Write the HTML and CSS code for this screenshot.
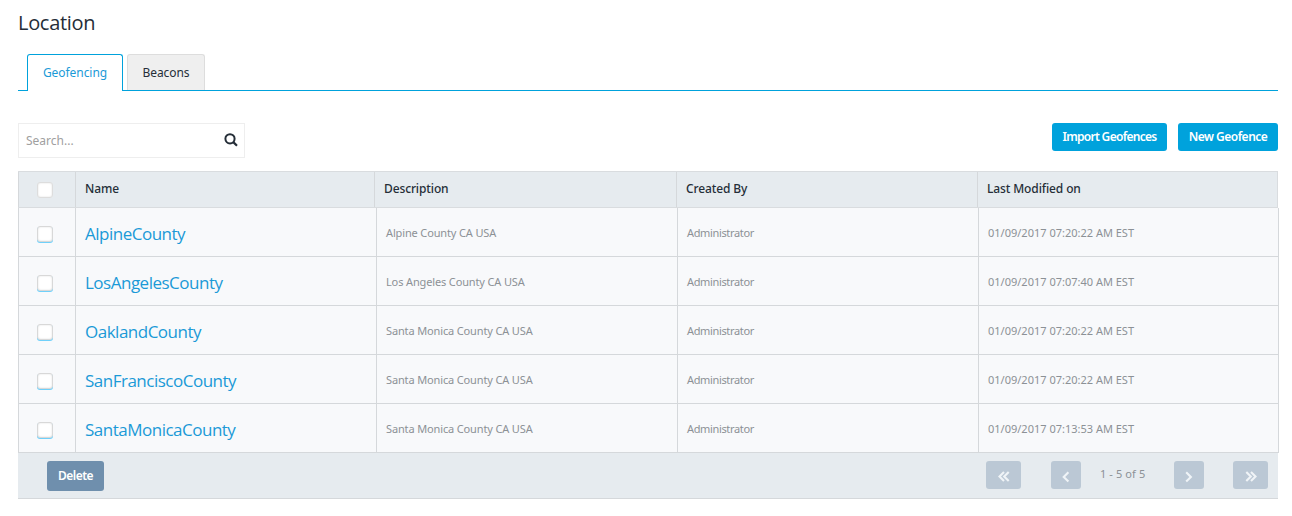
FILE: index.html
```html
<!DOCTYPE html>
<html lang="en">
<head>
<meta charset="utf-8">
<title>Location</title>
<link rel="stylesheet" href="styles.css">
</head>
<body>
<main class="page">
  <h1 class="title">Location</h1>
  <nav class="tabs">
    <a class="tab tab-active"><span class="tab-text">Geofencing</span></a>
    <a class="tab"><span class="tab-text">Beacons</span></a>
  </nav>
  <div class="toolbar">
    <div class="search">
      <span class="search-text">Search...</span>
      <svg class="search-icon" width="14" height="14" viewBox="0 0 14 14"><circle cx="6" cy="5.8" r="4.6" fill="none" stroke="#252e38" stroke-width="2"/><path d="M9.3 9.1L13 12.8" stroke="#252e38" stroke-width="2.2"/></svg>
    </div>
    <div class="actions">
      <button class="btn btn-import">Import Geofences</button>
      <button class="btn btn-new">New Geofence</button>
    </div>
  </div>
  <section class="table">
    <div class="row head">
      <div class="cell check"><span class="box box-head"></span></div>
      <div class="cell">Name</div>
      <div class="cell">Description</div>
      <div class="cell">Created By</div>
      <div class="cell">Last Modified on</div>
    </div>
    <div class="row item">
      <div class="cell check"><span class="box"></span></div>
      <div class="cell name">AlpineCounty</div>
      <div class="cell desc">Alpine County CA USA</div>
      <div class="cell author">Administrator</div>
      <div class="cell date">01/09/2017 07:20:22 AM EST</div>
    </div>
    <div class="row item">
      <div class="cell check"><span class="box"></span></div>
      <div class="cell name">LosAngelesCounty</div>
      <div class="cell desc">Los Angeles County CA USA</div>
      <div class="cell author">Administrator</div>
      <div class="cell date">01/09/2017 07:07:40 AM EST</div>
    </div>
    <div class="row item">
      <div class="cell check"><span class="box"></span></div>
      <div class="cell name">OaklandCounty</div>
      <div class="cell desc">Santa Monica County CA USA</div>
      <div class="cell author">Administrator</div>
      <div class="cell date">01/09/2017 07:20:22 AM EST</div>
    </div>
    <div class="row item">
      <div class="cell check"><span class="box"></span></div>
      <div class="cell name">SanFranciscoCounty</div>
      <div class="cell desc">Santa Monica County CA USA</div>
      <div class="cell author">Administrator</div>
      <div class="cell date">01/09/2017 07:20:22 AM EST</div>
    </div>
    <div class="row item">
      <div class="cell check"><span class="box"></span></div>
      <div class="cell name">SantaMonicaCounty</div>
      <div class="cell desc">Santa Monica County CA USA</div>
      <div class="cell author">Administrator</div>
      <div class="cell date">01/09/2017 07:13:53 AM EST</div>
    </div>
    <div class="footer">
      <button class="btn btn-delete">Delete</button>
      <div class="pager">
        <span class="page-btn page-wide"><svg width="12" height="12" viewBox="0 0 12 12"><path d="M6 1L1.5 5.5L6 10M10.7 1L6.2 5.5L10.7 10"/></svg></span>
        <span class="page-btn page-prev"><svg width="12" height="12" viewBox="0 0 12 12"><path d="M8.4 1.2L3.7 5.9L8.4 10.6"/></svg></span>
        <span class="page-count">1 - 5 of 5</span>
        <span class="page-btn page-next"><svg width="12" height="12" viewBox="0 0 12 12"><path d="M3.2 1.2L7.9 5.9L3.2 10.6"/></svg></span>
        <span class="page-btn page-wide"><svg width="12" height="12" viewBox="0 0 12 12"><path d="M1.3 1L5.8 5.5L1.3 10M6 1L10.5 5.5L6 10"/></svg></span>
      </div>
    </div>
  </section>
</main>
</body>
</html>
```
FILE: styles.css
```css
* { box-sizing: border-box; }
body {
  margin: 0;
  background: #fff;
  color: #252e38;
  font-family: "Noto Sans", "Open Sans", sans-serif;
  font-size: 12px;
}
.page { width: 1261px; margin-left: 18px; padding-top: 8px; }
.title { margin: 0; height: 46px; font-family: "Open Sans", sans-serif; font-size: 20px; line-height: 30px; font-weight: 400; letter-spacing: -0.3px; }
.tabs { display: flex; gap: 4px; width: 1260px; height: 37px; padding-left: 9px; border-bottom: 1px solid #00a2dc; }
.tab { display: flex; justify-content: center; width: 78px; height: 36px; border: 1px solid #ddd; border-bottom: 0; border-radius: 3px 3px 0 0; background: #efefef; line-height: 36px; }
.tab-active { width: 96px; height: 37px; border-color: #00a2dc; background: #fff; color: #1b9ad7; }
.tab-text { letter-spacing: -0.05px; white-space: nowrap; }
.toolbar { display: flex; justify-content: space-between; width: 1260px; height: 80px; padding-top: 32px; }
.search { display: flex; justify-content: space-between; width: 227px; height: 35px; padding: 0 6px 0 7px; border: 1px solid #eee; color: #a0a0a0; line-height: 33px; }
.search-icon { margin-top: 9px; }
.actions { display: flex; gap: 11px; }
.btn { display: block; height: 28px; padding: 0; border: 0; border-radius: 3px; background: #00a2dc; color: #fff; font: 600 12px/28px "Noto Sans", sans-serif; white-space: nowrap; }
.btn-import { width: 115px; letter-spacing: -0.7px; }
.btn-new { width: 100px; letter-spacing: -0.5px; }
.table { display: flex; flex-direction: column; }
.row { display: grid; }
.head { grid-template-columns: 57px 299px 302px 301px 301px; width: 1260px; height: 37px; border: solid #d9dcdf; border-width: 1px 1px 1px 0; background: #e6ebef; font-weight: 500; line-height: 34px; letter-spacing: -0.12px; }
.item { grid-template-columns: 57px 301px 301px 301px 301px; height: 49px; border: solid #d5d8db; border-width: 0 1px 1px 0; background: #f8f9fb; color: #8c9196; font-size: 11px; line-height: 50px; }
.cell { min-width: 0; padding-left: 9px; border-left: 1px solid #d5d8db; white-space: nowrap; overflow: hidden; }
.check { padding: 18px 0 0 18px; }
.head .check { padding-top: 10px; }
.box { display: block; width: 16px; height: 16px; border: 1px solid #d8d8d8; border-radius: 3px; background: #fff; box-shadow: inset 0 0 2px #ddd, 0 1px 0 #6fd0fa; }
.box-head { border-color: #ddd; box-shadow: inset 0 0 2px #ddd; }
.name { color: #1b9ad7; font-family: "Open Sans", sans-serif; font-size: 17px; font-weight: 400; line-height: 51px; letter-spacing: -0.5px; }
.desc { letter-spacing: -0.14px; }
.author { letter-spacing: -0.35px; }
.footer { display: flex; justify-content: space-between; width: 1260px; height: 46px; padding: 8px 10px 0 29px; border-bottom: 1px solid #d5d8db; background: #e6ebef; }
.btn-delete { width: 57px; height: 30px; background: #6f8fad; line-height: 30px; letter-spacing: -0.5px; }
.pager { display: flex; color: #8c9196; font-size: 11px; line-height: 26px; }
.page-btn { display: flex; justify-content: center; align-items: center; width: 30px; height: 28px; border-radius: 3px; background: #bbc8d5; }
.page-btn svg { margin-top: 3px; fill: none; stroke: #f0f4f7; stroke-width: 2.1; }
.page-wide { width: 35px; }
.page-prev { margin-left: 30px; }
.page-count { width: 93px; padding-left: 19px; white-space: nowrap; letter-spacing: 0.1px; }
.page-next { margin-right: 29px; }
```
